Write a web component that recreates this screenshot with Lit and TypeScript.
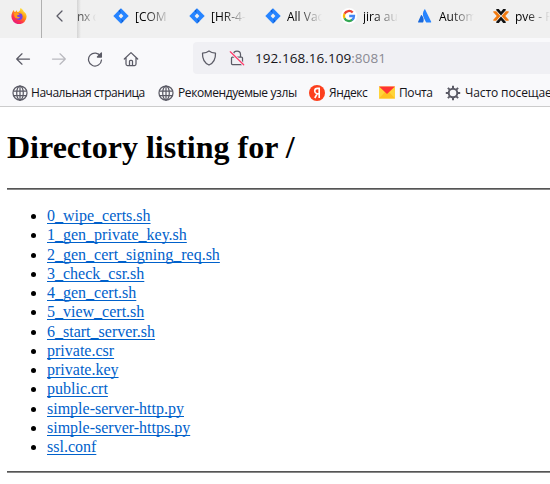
import { LitElement, html, svg, css } from "lit";
import { customElement } from "lit/decorators.js";

const jira = html`<svg class="fav" viewBox="0 0 16 16"><path fill="#2684ff" d="M8 0.3 15.7 8 8 15.7 0.3 8z"/><path fill="#0c5bd0" d="M8 5.2 5.4 2.9 8 .4c-1 1.3-1 3.300 0 4.800zM8 10.800l2.600 2.300L8 15.600c1-1.300 1-3.300 0-4.800z"/><path fill="#efeff0" d="M8 5.600 10.400 8 8 10.400 5.600 8z"/></svg>`;
const google = html`<svg class="fav" viewBox="0 0 16 16"><circle cx="8" cy="8" r="8" fill="#fff"/><g fill="none" stroke-width="2.300"><path stroke="#ea4335" d="M3.500 5.800A5 5 0 0 1 11.700 4.600"/><path stroke="#fbbc05" d="M3.500 5.700a5 5 0 0 0 0 4.600"/><path stroke="#34a853" d="M3.500 10.200A5 5 0 0 0 11.400 11.700"/><path stroke="#4285f4" d="M8.200 8H13a5 5 0 0 1-1.800 3.900"/></g></svg>`;
const atlassian = html`<svg class="fav" viewBox="0 0 16 16"><path fill="#1868db" d="M4.700 7.300c-.3-.3-.6-.3-.8.100L1.100 13.700c-.2.400 0 .8.500.8h4.200c.3 0 .4-.100.5-.4C7.200 12 6.600 9.300 4.700 7.300z"/><path fill="#2684ff" d="M7.400 1.600c-2 3.100-1.900 5.700-.5 8.400l2 4.100c.1.300.3.400.6.400h4.200c.5 0 .7-.4.500-.8L8.300 1.700c-.2-.4-.6-.5-.9-.100z"/></svg>`;
const proxmox = html`<svg class="fav" viewBox="0 0 16 16"><path fill="#111" d="M3.300 1h2.500L8 3.700 10.200 1h2.500v1.200L8 7.400 3.300 2.200zM3.300 15h2.500L8 12.300l2.200 2.700h2.500v-1.200L8 8.600l-4.700 5.200z"/><path fill="#f17a10" d="M.3 3.200h2.900L7.400 8l-4.200 4.800H.3v-1L3.700 8 .3 4.200zM15.700 3.200h-2.900L8.600 8l4.200 4.800h2.900v-1L12.300 8l3.400-3.800z"/></svg>`;
const firefox = html`<svg class="fav" viewBox="0 0 16 16"><defs><linearGradient id="flame" x1=".85" y1=".05" x2=".25" y2="1"><stop offset="0" stop-color="#fff24a"/><stop offset=".4" stop-color="#ff980e"/><stop offset=".7" stop-color="#ff3647"/><stop offset="1" stop-color="#e31587"/></linearGradient></defs><path fill="url(#flame)" d="M9.400 0c2 1 2.800 2.300 3.300 3.500 1.700 1 2.900 2.700 2.900 5A7.600 7.600 0 0 1 .4 8.600C.4 6 1.300 3.500 2.900 2l.5 2 1.500-.500L6 1.900l.2 2C8 4 9.200 3 9.400 0z"/><circle cx="8.200" cy="8.600" r="3.400" fill="#7542e5"/><path fill="#ff9a1c" d="M3 5.200C5.200 4.500 7.300 4.800 8.600 6.500c-1 .7-2.200.5-2.700 1.200.2 1 1.400 1.700 3 1.200-1 2.500-4.700 2.100-5.500-.300z"/></svg>`;

const line = (body: unknown, cls = "") =>
  html`<svg class="ico ${cls}" viewBox="0 0 16 16" fill="none" stroke="#5b5b66" stroke-width="1.250" stroke-linecap="round" stroke-linejoin="round">${body}</svg>`;

const globe = line(svg`<circle cx="8" cy="8" r="7"/><ellipse cx="8" cy="8" rx="3.300" ry="7"/><path d="M8 1v14M1.500 6h13M1.500 10.500h13"/>`);
const yandex = html`<svg class="ico" viewBox="0 0 16 16"><circle cx="8" cy="8" r="8" fill="#fc3f1d"/><path fill="none" stroke="#fff" stroke-width="1.600" d="M10.200 13V3.400H8.600C6.600 3.400 5.700 4.500 5.700 6c0 1.400.8 2.200 2.300 2.700h2.200M8.300 8.600 5.800 13"/></svg>`;
const mail = html`<svg class="ico" viewBox="0 0 16 16"><path fill="#ffd43a" d="M0 1.500h16v12H0z"/><path fill="#ffc020" d="M0 13.500 6 7h4l6 6.500z"/><path fill="#f33" d="M0 1.500h16L8 9z"/></svg>`;
const gear = html`<svg class="ico" viewBox="0 0 16 16" fill="none" stroke="#5b5b66"><circle cx="8" cy="8" r="4.300" stroke-width="2"/><path stroke-width="2" d="M8 .8V3.500M8 12.500v2.700M.8 8h2.700M12.500 8h2.700M2.900 2.900l2 2M11.100 11.100l2 2M13.100 2.900l-2 2M4.900 11.100l-2 2"/></svg>`;

const tabs = [
  { icon: jira, label: "[COM" },
  { icon: jira, label: "[HR-4-" },
  { icon: jira, label: "All Vac" },
  { icon: google, label: "jira aut" },
  { icon: atlassian, label: "Autom" },
  { icon: proxmox, label: "pve - P" },
];

const bookmarks = [
  { icon: globe, label: "Начальная страница", cls: "b1" },
  { icon: globe, label: "Рекомендуемые узлы", cls: "b2" },
  { icon: yandex, label: "Яндекс", cls: "b3" },
  { icon: mail, label: "Почта", cls: "b4" },
  { icon: gear, label: "Часто посещаемые", cls: "b5" },
];

const files = [
  "0_wipe_certs.sh", "1_gen_private_key.sh", "2_gen_cert_signing_req.sh",
  "3_check_csr.sh", "4_gen_cert.sh", "5_view_cert.sh", "6_start_server.sh",
  "private.csr", "private.key", "public.crt", "simple-server-http.py",
  "simple-server-https.py", "ssl.conf",
];

@customElement("app-root")
export class AppRoot extends LitElement {
  static styles = css`
    :host { display: block; width: 550px; height: 484px; overflow: hidden; background: #fff; font: 12px "Open Sans", "Noto Sans", sans-serif; color: #15141a; }
    * { box-sizing: border-box; }
    svg { display: block; flex: none; }
    .fav, .ico { width: 16px; height: 16px; }
    .tabs { display: flex; height: 38px; background: #f0f0f0; overflow: hidden; }
    .pinned { width: 42px; flex: none; border-right: 1px solid #b0b0b0; padding: 8px 0 0 11px; }
    .scroll { width: 35px; flex: none; padding: 8px 0 0 10px; }
    .cut { width: 28px; flex: none; padding: 8px 0 0; line-height: 17px; background: linear-gradient(90deg, #d4d4d4, #f0f0f0 4px); }
    .cut span, .label { display: block; white-space: nowrap; -webkit-mask-image: linear-gradient(90deg, #000 30%, transparent); mask-image: linear-gradient(90deg, #000 30%, transparent); }
    .cut span { width: 19px; color: #555; letter-spacing: -0.3px; }
    .tab { display: flex; flex: none; gap: 6px; width: 76px; padding: 8px 0 0 8px; }
    .label { width: 35px; line-height: 17px; color: #000; }
    .nav { display: flex; align-items: center; height: 42px; padding: 0 0 1px 15px; background: #f9f9fb; }
    .nav > .ico { margin-right: 20px; }
    .nav > .home { margin-right: 54px; }
    .faded { opacity: .4; }
    .url { display: flex; align-items: center; flex: 1; height: 32px; margin-top: -1px; border-radius: 4px 0 0 4px; background: #f0f0f4; padding-left: 8px; }
    .lock { margin: 0 10px 0 12px; }
    .addr { font-size: 13.500px; line-height: 18px; letter-spacing: 0.05px; }
    .port { color: #8a8a93; }
    .marks { display: flex; height: 27px; padding: 5px 0 0 12px; background: #f9f9fb; border-bottom: 1px solid #ccc; white-space: nowrap; overflow: hidden; }
    .mark { display: flex; flex: none; gap: 4px; line-height: 16px; letter-spacing: -0.4px; }
    .b1 { width: 146px; gap: 3px; letter-spacing: -0.47px; } .b2 { width: 151px; } .b3 { width: 70px; } .b4 { width: 66px; }
    .b5 { letter-spacing: -0.1px; }
    .page { padding: 21px 0 0 7px; font-family: "Liberation Serif", serif; color: #000; }
    h1 { margin: 0; font-size: 32px; line-height: 38px; font-weight: 700; }
    .rule { height: 2px; border-top: 1px solid #555; background: #888; }
    .top { margin-top: 22px; }
    ul { margin: 16px 0 15px; padding-left: 40px; font-size: 16px; line-height: 19.250px; }
    a { color: #0061cb; text-decoration: underline; text-decoration-thickness: 1px; text-underline-offset: 2px; text-decoration-skip-ink: none; }
  `;

  render() {
    return html`
      <div class="tabs">
        <div class="pinned">${firefox}</div>
        <div class="scroll">${line(svg`<path d="M10 3 5 8l5 5"/>`)}</div>
        <div class="cut"><span>nx c</span></div>
        ${tabs.map((t) => html`<div class="tab">${t.icon}<span class="label">${t.label}</span></div>`)}
      </div>
      <div class="nav">
        ${line(svg`<path d="M14.500 8H1.700M7 2.800 1.700 8 7 13.200"/>`)}
        ${line(svg`<path d="M1.500 8h12.800M9 2.800 14.300 8 9 13.200"/>`, "faded")}
        ${line(svg`<path d="M13.700 5.400A6.500 6.500 0 1 0 14.500 9"/><path fill="#5b5b66" d="M14.400 2v4h-4z"/>`)}
        ${line(svg`<path d="M1.300 8 8 1.600 14.700 8M3 6.800V13c0 1 .5 1.500 1.500 1.500h7c1 0 1.500-.5 1.500-1.500V6.800M6.500 14V10.300c0-.7.3-1 1-1h1c.7 0 1 .3 1 1V14"/>`, "home")}
        <div class="url">
          ${line(svg`<path d="M8 1c2 1.500 4.300 2 6.500 2.200C14.700 9 12.500 13 8 15 3.500 13 1.300 9 1.500 3.200 3.700 3 6 2.500 8 1z"/>`)}
          ${line(svg`<path d="M4.500 7V4.500C4.500 2.300 6 1 8 1s3.500 1.300 3.500 3.500V7M3.500 7h9c.7 0 1 .3 1 1v5.500c0 .7-.3 1-1 1h-9c-.7 0-1-.3-1-1V8c0-.7.3-1 1-1z"/><path stroke="#f0f0f4" stroke-width="3" d="M1.500 2 15 15"/><path stroke="#ff3b6b" d="M1.300 1.800 14.700 14.800"/>`, "lock")}
          <span class="addr">192.168.16.109<span class="port">:8081</span></span>
        </div>
      </div>
      <div class="marks">
        ${bookmarks.map((b) => html`<div class="mark ${b.cls}">${b.icon}<span>${b.label}</span></div>`)}
      </div>
      <main class="page">
        <h1>Directory listing for /</h1>
        <div class="rule top"></div>
        <ul>${files.map((f) => html`<li><a>${f}</a></li>`)}</ul>
        <div class="rule"></div>
      </main>
    `;
  }
}
